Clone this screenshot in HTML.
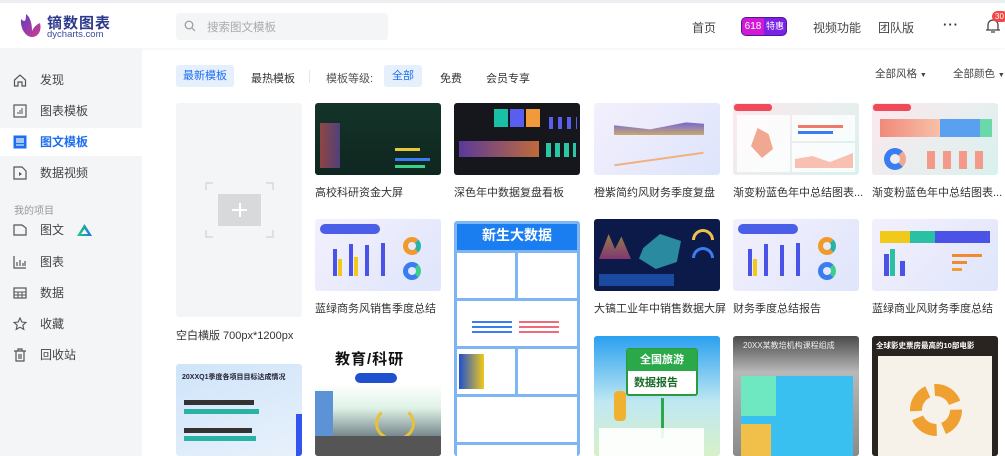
<!DOCTYPE html>
<html><head><meta charset="utf-8"><style>
*{margin:0;padding:0;box-sizing:border-box}
body{width:1005px;height:456px;overflow:hidden;background:#fff;font-family:"Liberation Sans","Noto Sans CJK SC",sans-serif;color:#333;position:relative}
.abs{position:absolute}
.top{left:0;top:0;width:1005px;height:3px;background:#eceef1}
.hdr{left:0;top:3px;width:1005px;height:45px;background:#fff;box-shadow:0 1px 3px rgba(0,0,0,.05)}
.side{left:0;top:48px;width:142px;height:408px;background:#f4f5f7}
.si{position:absolute;left:0;width:142px;height:28px;font-size:12px;color:#444;line-height:28px;padding-left:40px}
.si svg{position:absolute;left:13px;top:7px}
.t{font-size:11px;color:#333;white-space:nowrap}
.card{position:absolute;border-radius:3px;overflow:hidden}
.lbl{position:absolute;font-size:11px;color:#333;white-space:nowrap}
</style></head><body>
<div class="abs top"></div>
<div class="abs hdr"></div>
<!-- logo -->
<svg class="abs" style="left:18px;top:13px" width="26" height="26" viewBox="0 0 26 26"><defs><linearGradient id="lg" x1="0" y1="0" x2="1" y2="1"><stop offset="0" stop-color="#5a3fc4"/><stop offset="1" stop-color="#d43a8c"/></linearGradient></defs><path d="M3 6 C2 16 8 24 14 24 C20 24 24 18 22 10 C18 12 16 14 14 18 C14 10 12 4 8 1 C8 8 7 10 3 6Z" fill="url(#lg)"/></svg>
<div class="abs" style="left:47px;top:12px;font-size:15px;font-weight:bold;color:#2d3a8c;letter-spacing:1px">镝数图表</div>
<div class="abs" style="left:47px;top:29px;font-size:9.5px;color:#3a4a9a">dycharts.com</div>
<div class="abs" style="left:176px;top:13px;width:212px;height:27px;background:#f4f5f7;border-radius:3px"></div>
<svg class="abs" style="left:184px;top:20px" width="12" height="12" viewBox="0 0 12 12"><circle cx="5" cy="5" r="3.8" fill="none" stroke="#999" stroke-width="1.2"/><path d="M8 8l3 3" stroke="#999" stroke-width="1.2"/></svg>
<div class="abs t" style="left:207px;top:19px;color:#aaa;font-size:11.5px">搜索图文模板</div>
<div class="abs t" style="left:692px;top:19px;font-size:12px;color:#444">首页</div>
<div class="abs" style="left:741px;top:17px;width:46px;height:19px;border-radius:5px;background:#7a22e6;overflow:hidden;border:1px solid #4a1a90"><div style="position:absolute;left:0;top:0;width:22px;height:19px;background:#d21ad6;color:#fff;font-size:10px;line-height:17px;text-align:center">618</div><div style="position:absolute;left:24px;top:0;color:#fff;font-size:9px;line-height:17px">特惠</div></div>
<div class="abs t" style="left:813px;top:19px;font-size:12px;color:#444">视频功能</div>
<div class="abs t" style="left:878px;top:19px;font-size:12px;color:#444">团队版</div>
<div class="abs t" style="left:943px;top:17px;font-size:13px;color:#333;letter-spacing:1px;font-weight:bold">···</div>
<svg class="abs" style="left:985px;top:17px" width="16" height="17" viewBox="0 0 16 17"><path d="M3 13V8a5 5 0 0 1 10 0v5h2H1h2M6 15h4" fill="none" stroke="#444" stroke-width="1.3"/></svg>
<div class="abs" style="left:992px;top:11px;width:16px;height:11px;background:#f04848;border-radius:6px;color:#fff;font-size:8px;line-height:11px;padding-left:3px">30</div>

<div class="abs side"></div>
<div class="si" style="top:66px"><svg width="14" height="14" viewBox="0 0 14 14"><path d="M1.5 7L7 2l5.5 5v6H9V9H5v4H1.5Z" fill="none" stroke="#555" stroke-width="1.2"/></svg>发现</div>
<div class="si" style="top:97px"><svg width="14" height="14" viewBox="0 0 14 14"><rect x="1" y="1" width="12" height="12" fill="none" stroke="#555" stroke-width="1.2"/><path d="M5 10V8M7 10V6M9 10V4" stroke="#555"/></svg>图表模板</div>
<div class="si" style="top:128px;background:#fff;color:#1e6ff0;font-weight:bold"><svg width="14" height="14" viewBox="0 0 14 14"><rect x="0.5" y="0.5" width="13" height="13" fill="#1e6ff0"/><rect x="3" y="3" width="8" height="5" fill="#fff" opacity=".6"/><path d="M3 10h8" stroke="#fff"/></svg>图文模板</div>
<div class="si" style="top:159px"><svg width="14" height="14" viewBox="0 0 14 14"><path d="M1 1h8l4 4v8H1Z" fill="none" stroke="#555" stroke-width="1.2"/><path d="M6 6v4l3-2z" fill="#555"/></svg>数据视频</div>
<div class="abs" style="left:14px;top:202px;font-size:10px;color:#999">我的项目</div>
<div class="si" style="top:216px"><svg width="14" height="14" viewBox="0 0 14 14"><path d="M1 2h8l4 3v7H1Z" fill="none" stroke="#555" stroke-width="1.2"/></svg>图文</div>
<svg class="abs" style="left:76px;top:223px" width="17" height="14" viewBox="0 0 17 14"><defs><linearGradient id="tg" x1="0" y1="0" x2="1" y2="0"><stop offset="0" stop-color="#20d46a"/><stop offset="1" stop-color="#1e6ff0"/></linearGradient></defs><path d="M8.5 1L16 13H1Z M8.5 6L5 11h7Z" fill="url(#tg)" fill-rule="evenodd"/></svg>
<div class="si" style="top:248px"><svg width="14" height="14" viewBox="0 0 14 14"><path d="M1 1v12h12M4 11V7M7 11V5M10 11V8M12 11V6" fill="none" stroke="#555" stroke-width="1.2"/></svg>图表</div>
<div class="si" style="top:279px"><svg width="14" height="14" viewBox="0 0 14 14"><rect x="1" y="2" width="12" height="10" fill="none" stroke="#555" stroke-width="1.2"/><path d="M1 6h12M1 9h12M5 6v6M9 6v6" stroke="#555"/></svg>数据</div>
<div class="si" style="top:310px"><svg width="14" height="14" viewBox="0 0 14 14"><path d="M7 1l1.8 4 4.2.4-3.2 2.8 1 4.2L7 10.2 3.2 12.4l1-4.2L1 5.4l4.2-.4Z" fill="none" stroke="#555" stroke-width="1.1"/></svg>收藏</div>
<div class="si" style="top:341px"><svg width="14" height="14" viewBox="0 0 14 14"><path d="M1 3h12M5 3V1h4v2M3 3v10h8V3M6 6v5M8 6v5" fill="none" stroke="#555" stroke-width="1.2"/></svg>回收站</div>

<!-- filter -->
<div class="abs" style="left:176px;top:65px;width:58px;height:22px;background:#e6f0fd;border-radius:3px;color:#1e6ff0;font-size:11px;line-height:22px;text-align:center">最新模板</div>
<div class="abs t" style="left:251px;top:70px">最热模板</div>
<div class="abs" style="left:309px;top:70px;width:1px;height:13px;background:#e5e5e5"></div>
<div class="abs t" style="left:326px;top:70px;color:#555">模板等级:</div>
<div class="abs" style="left:384px;top:65px;width:38px;height:22px;background:#e6f0fd;border-radius:3px;color:#1e6ff0;font-size:11px;line-height:22px;text-align:center">全部</div>
<div class="abs t" style="left:440px;top:70px">免费</div>
<div class="abs t" style="left:486px;top:70px">会员专享</div>
<div class="abs t" style="left:875px;top:66px;font-size:10.5px;color:#444">全部风格 <span style="font-size:7px">▼</span></div>
<div class="abs t" style="left:953px;top:66px;font-size:10.5px;color:#444">全部颜色 <span style="font-size:7px">▼</span></div>

<!-- col1 -->
<div class="card" style="left:176px;top:103px;width:126px;height:214px;background:#f4f5f7"></div>
<div class="abs" style="left:218px;top:194px;width:43px;height:32px;background:#d8d9db"></div>
<div class="abs" style="left:239px;top:203px;width:1.5px;height:14px;background:#fff"></div>
<div class="abs" style="left:232px;top:209px;width:15px;height:1.5px;background:#fff"></div>
<svg class="abs" style="left:205px;top:182px" width="69" height="56" viewBox="0 0 69 56"><path d="M1 8V1h7M61 1h7v7M1 48v7h7M61 55h7v-7" fill="none" stroke="#d8d9db" stroke-width="1.5"/></svg>
<div class="lbl" style="left:176px;top:327px">空白横版 700px*1200px</div>
<div class="card" style="left:176px;top:364px;width:126px;height:92px;background:linear-gradient(160deg,#cfe4fa,#e8f1fb)"><div style="font-size:7px;font-weight:bold;color:#223;padding:8px 6px">20XXQ1季度各项目目标达成情况</div><div style="position:absolute;left:8px;top:36px;width:70px;height:5px;background:#333"></div><div style="position:absolute;left:8px;top:45px;width:75px;height:5px;background:#2ab3a4"></div><div style="position:absolute;left:8px;top:64px;width:68px;height:5px;background:#333"></div><div style="position:absolute;left:8px;top:72px;width:72px;height:5px;background:#2ab3a4"></div><div style="position:absolute;right:0;top:50px;width:6px;height:42px;background:#3355ee"></div></div>

<!-- col2 -->
<div class="card" style="left:315px;top:103px;width:126px;height:72px;background:linear-gradient(180deg,#143428,#0e2620)"><div style="position:absolute;left:5px;top:20px;width:20px;height:45px;background:linear-gradient(90deg,#c65050,#6a4aa0);opacity:.7"></div><div style="position:absolute;left:80px;top:55px;width:35px;height:3px;background:#3a7df0"></div><div style="position:absolute;left:80px;top:45px;width:25px;height:3px;background:#e7c83a"></div><div style="position:absolute;left:80px;top:62px;width:30px;height:3px;background:#3ad08a"></div></div>
<div class="lbl" style="left:315px;top:184px">高校科研资金大屏</div>
<div class="card" style="left:315px;top:219px;width:126px;height:72px;background:linear-gradient(135deg,#f3f0fd,#dfe5fb)"><div style="position:absolute;left:5px;top:5px;width:60px;height:10px;background:#4a5ee8;border-radius:5px"></div><div style="position:absolute;left:18px;top:30px;width:4px;height:27px;background:#4a52e8"></div><div style="position:absolute;left:23px;top:40px;width:4px;height:17px;background:#f0c91a"></div><div style="position:absolute;left:34px;top:25px;width:4px;height:32px;background:#4a52e8"></div><div style="position:absolute;left:39px;top:38px;width:4px;height:19px;background:#f0c91a"></div><div style="position:absolute;left:50px;top:26px;width:4px;height:31px;background:#4a52e8"></div><div style="position:absolute;left:66px;top:24px;width:4px;height:33px;background:#4a52e8"></div><div style="position:absolute;left:88px;top:18px;width:18px;height:18px;border-radius:50%;border:5px solid #f09a2a;border-right-color:#2ab3a4"></div><div style="position:absolute;left:88px;top:43px;width:18px;height:18px;border-radius:50%;border:5px solid #3a7df0;border-right-color:#3ad08a"></div></div>
<div class="lbl" style="left:315px;top:300px">蓝绿商务风销售季度总结</div>
<div class="card" style="left:315px;top:336px;width:126px;height:120px;background:linear-gradient(180deg,#fff 0%,#fff 40%,#dff2e6 60%,#5a6a74 90%)"><div style="position:absolute;left:20px;top:12px;font-size:15px;font-weight:bold;color:#111;letter-spacing:1px">教育/科研</div><div style="position:absolute;left:40px;top:37px;width:42px;height:10px;background:#1e50d0;border-radius:5px"></div><div style="position:absolute;left:0;top:55px;width:18px;height:45px;background:#5b93d6"></div><div style="position:absolute;left:60px;top:70px;width:40px;height:35px;border-radius:50%;border:3px solid #e8c13a;border-top-color:transparent"></div><div style="position:absolute;left:0;top:100px;width:126px;height:20px;background:#555"></div></div>

<!-- col3 -->
<div class="card" style="left:454px;top:103px;width:126px;height:72px;background:#15171c"><div style="position:absolute;left:40px;top:6px;width:14px;height:18px;background:#18c0a6"></div><div style="position:absolute;left:56px;top:6px;width:14px;height:18px;background:#5a5ef0"></div><div style="position:absolute;left:72px;top:6px;width:14px;height:18px;background:#f29a3a"></div><div style="position:absolute;left:5px;top:38px;width:80px;height:16px;background:linear-gradient(90deg,#5a3a9a,#c06a3a)"></div><div style="position:absolute;left:92px;top:40px;width:30px;height:14px;background:repeating-linear-gradient(90deg,#2bc6a4 0 5px,transparent 5px 9px)"></div><div style="position:absolute;left:95px;top:14px;width:28px;height:12px;background:repeating-linear-gradient(90deg,#5a5ef0 0 4px,transparent 4px 9px)"></div></div>
<div class="lbl" style="left:454px;top:184px">深色年中数据复盘看板</div>
<div class="card" style="left:454px;top:221px;width:126px;height:235px;background:#7db6f3"><div style="position:absolute;left:3px;top:3px;width:120px;height:26px;background:#1b7ef0;color:#fff;font-size:14px;font-weight:bold;text-align:center;line-height:22px">新生大数据</div><div style="position:absolute;left:3px;top:32px;width:58px;height:45px;background:#fff"></div><div style="position:absolute;left:64px;top:32px;width:59px;height:45px;background:#fff"></div><div style="position:absolute;left:3px;top:80px;width:120px;height:45px;background:#fff"></div><div style="position:absolute;left:3px;top:128px;width:58px;height:45px;background:#fff"></div><div style="position:absolute;left:64px;top:128px;width:59px;height:45px;background:#fff"></div><div style="position:absolute;left:3px;top:176px;width:120px;height:45px;background:#fff"></div><div style="position:absolute;left:3px;top:224px;width:120px;height:11px;background:#fff"></div><div style="position:absolute;left:5px;top:133px;width:25px;height:35px;background:linear-gradient(90deg,#1e50d0,#f0c91a)"></div><div style="position:absolute;left:18px;top:100px;width:40px;height:15px;background:repeating-linear-gradient(180deg,#3a7df0 0 2px,transparent 2px 5px)"></div><div style="position:absolute;left:65px;top:100px;width:40px;height:15px;background:repeating-linear-gradient(180deg,#f06a7a 0 2px,transparent 2px 5px)"></div></div>

<!-- col4 -->
<div class="card" style="left:594px;top:103px;width:126px;height:72px;background:linear-gradient(135deg,#f4f0fd,#dde4fb)"><div style="position:absolute;left:20px;top:18px;width:90px;height:14px;background:linear-gradient(180deg,#6a60e0,#c8a870);clip-path:polygon(0 30%,40% 60%,80% 10%,100% 20%,100% 100%,0 100%)"></div><div style="position:absolute;left:20px;top:55px;width:90px;height:2px;background:#f0b080;transform:rotate(-8deg)"></div></div>
<div class="lbl" style="left:594px;top:184px">橙紫简约风财务季度复盘</div>
<div class="card" style="left:594px;top:219px;width:126px;height:72px;background:#0c1a4a"><div style="position:absolute;left:45px;top:15px;width:42px;height:35px;background:#2a8aa0;clip-path:polygon(10% 40%,50% 0,100% 20%,90% 80%,40% 100%,0 70%)"></div><div style="position:absolute;left:5px;top:15px;width:32px;height:25px;background:linear-gradient(0deg,#d04a8a,#f0c04a);opacity:.6;clip-path:polygon(0 100%,30% 0,50% 60%,70% 10%,100% 100%)"></div><div style="position:absolute;left:98px;top:10px;width:22px;height:11px;border-radius:11px 11px 0 0;border:3px solid #f0c04a;border-bottom:none"></div><div style="position:absolute;left:98px;top:28px;width:22px;height:11px;border-radius:11px 11px 0 0;border:3px solid #3a7df0;border-bottom:none"></div><div style="position:absolute;left:5px;top:55px;width:75px;height:12px;background:#1a4aa0"></div></div>
<div class="lbl" style="left:594px;top:300px">大镐工业年中销售数据大屏</div>
<div class="card" style="left:594px;top:336px;width:126px;height:120px;background:linear-gradient(180deg,#2aa0f0,#bfe8f2 55%,#d8f0c8)"><div style="position:absolute;left:32px;top:12px;width:72px;height:48px;background:#fff;border:2px solid #2a9a3a;border-radius:3px"></div><div style="position:absolute;left:33px;top:13px;width:70px;height:22px;background:#2aa84a;color:#fff;font-size:11px;font-weight:bold;line-height:22px;text-align:center">全国旅游</div><div style="position:absolute;left:40px;top:38px;font-size:11px;font-weight:bold;color:#1a6a2a">数据报告</div><div style="position:absolute;left:67px;top:62px;width:3px;height:40px;background:#2aa84a"></div><div style="position:absolute;left:20px;top:55px;width:12px;height:30px;background:#f0b030;border-radius:4px"></div><div style="position:absolute;left:5px;top:92px;width:105px;height:28px;background:#fff;opacity:.9"></div></div>

<!-- col5 -->
<div class="card" style="left:733px;top:103px;width:126px;height:72px;background:linear-gradient(135deg,#fde8ee,#d8f2ee)"><div style="position:absolute;left:1px;top:1px;width:38px;height:7px;background:#f04a5a;border-radius:3px"></div><div style="position:absolute;left:4px;top:12px;width:53px;height:57px;background:#fff;opacity:.8"></div><div style="position:absolute;left:59px;top:12px;width:63px;height:26px;background:#fff;opacity:.8"></div><div style="position:absolute;left:59px;top:40px;width:63px;height:29px;background:#fff;opacity:.8"></div><div style="position:absolute;left:18px;top:25px;width:22px;height:30px;background:#f0a890;clip-path:polygon(30% 0,80% 20%,100% 70%,50% 100%,0 60%)"></div><div style="position:absolute;left:65px;top:22px;width:45px;height:3px;background:#f07a6a"></div><div style="position:absolute;left:65px;top:28px;width:35px;height:3px;background:#3a7df0"></div><div style="position:absolute;left:62px;top:50px;width:58px;height:15px;background:#f8c0b0;clip-path:polygon(0 40%,30% 20%,60% 60%,100% 0,100% 100%,0 100%)"></div></div>
<div class="lbl" style="left:733px;top:184px">渐变粉蓝色年中总结图表...</div>
<div class="card" style="left:733px;top:219px;width:126px;height:72px;background:linear-gradient(135deg,#f3f0fd,#dfe5fb)"><div style="position:absolute;left:5px;top:5px;width:60px;height:10px;background:#4a5ee8;border-radius:5px"></div><div style="position:absolute;left:15px;top:30px;width:4px;height:27px;background:#4a52e8"></div><div style="position:absolute;left:20px;top:40px;width:4px;height:17px;background:#f0c91a"></div><div style="position:absolute;left:31px;top:25px;width:4px;height:32px;background:#4a52e8"></div><div style="position:absolute;left:47px;top:26px;width:4px;height:31px;background:#4a52e8"></div><div style="position:absolute;left:63px;top:24px;width:4px;height:33px;background:#4a52e8"></div><div style="position:absolute;left:85px;top:18px;width:18px;height:18px;border-radius:50%;border:5px solid #f09a2a;border-right-color:#2ab3a4"></div><div style="position:absolute;left:85px;top:43px;width:18px;height:18px;border-radius:50%;border:5px solid #3a7df0;border-right-color:#3ad08a"></div></div>
<div class="lbl" style="left:733px;top:300px">财务季度总结报告</div>
<div class="card" style="left:733px;top:336px;width:126px;height:120px;background:linear-gradient(180deg,#4a4a4a,#b8b8b8 30%,#8a8a8a)"><div style="position:absolute;left:10px;top:4px;font-size:8px;color:#eee">20XX某教培机构课程组成</div><div style="position:absolute;left:8px;top:40px;width:112px;height:80px;background:#3ac0f0;clip-path:polygon(0 0,100% 0,100% 100%,0 100%)"></div><div style="position:absolute;left:8px;top:40px;width:35px;height:40px;background:#6ee8c0"></div><div style="position:absolute;left:8px;top:88px;width:30px;height:32px;background:#f0c04a"></div></div>

<!-- col6 -->
<div class="card" style="left:872px;top:103px;width:126px;height:72px;background:linear-gradient(135deg,#fde8ee,#d8f2ee)"><div style="position:absolute;left:1px;top:1px;width:38px;height:7px;background:#f04a5a;border-radius:3px"></div><div style="position:absolute;left:8px;top:16px;width:60px;height:18px;background:linear-gradient(90deg,#f08a7a,#f8c0a8)"></div><div style="position:absolute;left:68px;top:16px;width:40px;height:18px;background:#5aa0f0"></div><div style="position:absolute;left:108px;top:16px;width:12px;height:18px;background:#6ad8a8"></div><div style="position:absolute;left:12px;top:45px;width:22px;height:22px;border-radius:50%;border:6px solid #3a7df0;border-right-color:#f0a890"></div><div style="position:absolute;left:55px;top:48px;width:60px;height:18px;background:repeating-linear-gradient(90deg,#f59a8a 0 8px,transparent 8px 16px)"></div></div>
<div class="lbl" style="left:872px;top:184px">渐变粉蓝色年中总结图表...</div>
<div class="card" style="left:872px;top:219px;width:126px;height:72px;background:linear-gradient(135deg,#f3f0fd,#dfe5fb)"><div style="position:absolute;left:8px;top:12px;width:30px;height:12px;background:#f0c91a"></div><div style="position:absolute;left:38px;top:12px;width:25px;height:12px;background:#2ac0a4"></div><div style="position:absolute;left:63px;top:12px;width:55px;height:12px;background:#4a52e8"></div><div style="position:absolute;left:12px;top:35px;width:5px;height:22px;background:#4a52e8"></div><div style="position:absolute;left:18px;top:30px;width:5px;height:27px;background:#2ac0a4"></div><div style="position:absolute;left:28px;top:42px;width:5px;height:15px;background:#4a52e8"></div><div style="position:absolute;left:80px;top:35px;width:30px;height:3px;background:#f08a2a"></div><div style="position:absolute;left:80px;top:42px;width:15px;height:3px;background:#f08a2a"></div><div style="position:absolute;left:80px;top:49px;width:10px;height:3px;background:#f0a030"></div></div>
<div class="lbl" style="left:872px;top:300px">蓝绿商业风财务季度总结</div>
<div class="card" style="left:872px;top:336px;width:126px;height:120px;background:#2a2420"><div style="position:absolute;left:4px;top:4px;font-size:7.5px;color:#fff;font-weight:bold">全球影史票房最高的10部电影</div><div style="position:absolute;left:6px;top:20px;width:114px;height:100px;background:#f6f2ea"></div><div style="position:absolute;left:38px;top:48px;width:52px;height:52px;border-radius:50%;border:12px dashed #f0a030"></div></div>
</body></html>
